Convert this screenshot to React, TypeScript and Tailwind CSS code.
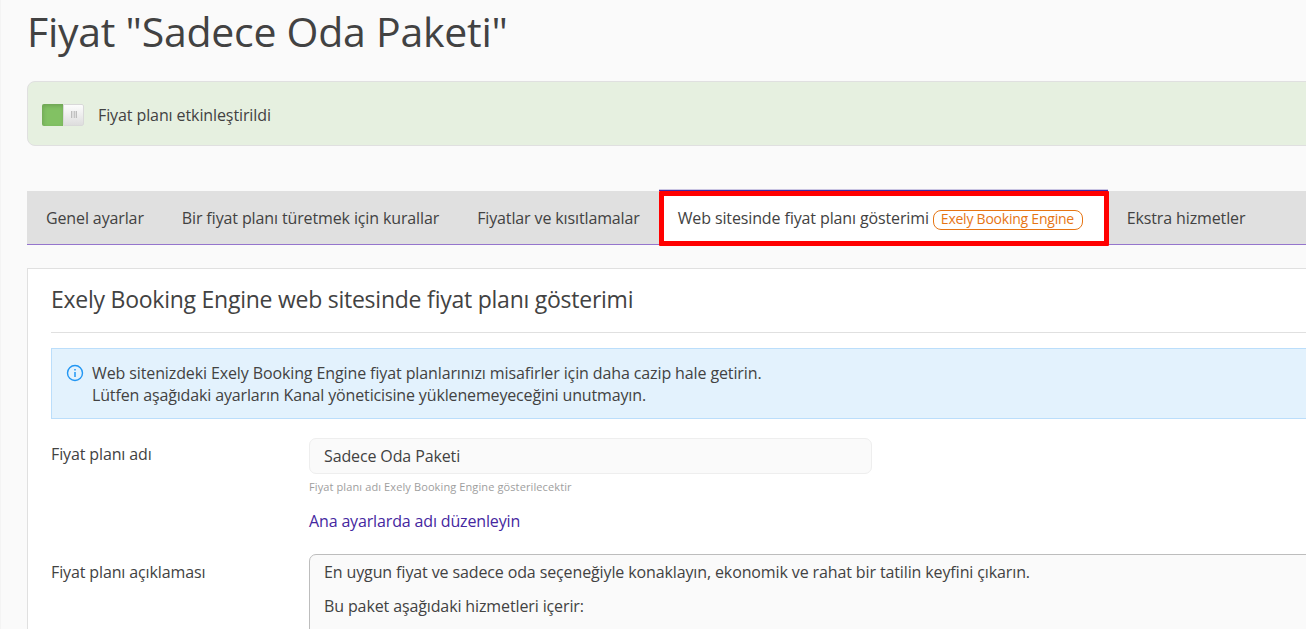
import { clsx } from 'clsx';

const tabs = [
  { id: 'general', label: 'Genel ayarlar' },
  { id: 'derive', label: 'Bir fiyat planı türetmek için kurallar' },
  { id: 'prices', label: 'Fiyatlar ve kısıtlamalar' },
  { id: 'website', label: 'Web sitesinde fiyat planı gösterimi', badge: 'Exely Booking Engine' },
  { id: 'extras', label: 'Ekstra hizmetler' },
];

function Toggle() {
  return (
    <button
      role="switch"
      aria-checked="true"
      className="flex h-[22px] w-[42px] shrink-0 overflow-hidden rounded-[2px]"
    >
      <span className="h-full w-[21px] bg-[#82c163] shadow-[inset_1px_2px_4px_rgba(0,0,0,0.16)]" />
      <span className="flex h-full w-[21px] items-center justify-center rounded-r-[2px] border border-[#d9d9d9] bg-linear-to-b from-[#fdfdfd] to-[#dedede] pb-px pl-px">
        <span className="flex h-[7px] w-[6px] justify-between bg-[#dedede]">
          <span className="w-px bg-[#bdbdbd]" />
          <span className="w-px bg-[#c4c4c4]" />
          <span className="w-px bg-[#bdbdbd]" />
        </span>
      </span>
    </button>
  );
}

function TabBar({ active }: { active: string }) {
  return (
    <nav className="mt-[43px] flex h-14 w-[1400px] items-end">
      {tabs.map((tab) => {
        const isActive = tab.id === active;
        return (
          <div
            key={tab.id}
            className={clsx(
              'shrink-0',
              isActive
                ? 'relative h-14 w-[449px] border-t border-[#c9c4e2]'
                : 'flex h-[54px] items-center border-b border-[#9575cd] bg-[#e0e0e0] px-[19px]'
            )}
          >
            {isActive ? (
              <div className="h-[55px] border-t border-[#4527a0]">
                <div className="flex h-[55px] w-[450px] items-center rounded-[1px] border-[5px] border-[#ff0000] bg-white pb-px pl-[14px]">
                  <span className="whitespace-nowrap">{tab.label}</span>
                  <span className="mt-1 ml-1 flex h-5 w-[150px] items-center justify-center rounded-[8px] border border-[#e67514] pr-px pb-[3px] text-sm tracking-[-0.23px] whitespace-nowrap text-[#e67514]">
                    {tab.badge}
                  </span>
                </div>
              </div>
            ) : (
              <span className="whitespace-nowrap">{tab.label}</span>
            )}
          </div>
        );
      })}
      <div className="h-[54px] flex-1 border-b border-[#9575cd] bg-[#e0e0e0]" />
    </nav>
  );
}

function InfoIcon() {
  return (
    <svg className="mt-[15px] h-[18px] w-[18px] shrink-0" viewBox="0 0 18 18" fill="none">
      <circle cx="9" cy="9" r="7.5" stroke="#2196f3" strokeWidth="1.4" />
      <path d="M9 8v5M9 5v1.6" stroke="#2196f3" strokeWidth="1.5" />
    </svg>
  );
}

export default function App() {
  return (
    <div className="h-[629px] w-full overflow-hidden border-l border-[#f4f4f4] bg-[#fafafa] pl-[26px] font-['Open_Sans',sans-serif] text-base tracking-[-0.125px] text-[#424242] [font-feature-settings:'liga']">
      <h1 className="h-[81px] pt-[3px] text-[41px] leading-[56px] tracking-[-0.25px] whitespace-nowrap">
        Fiyat "Sadece Oda Paketi"
      </h1>

      <div className="flex h-[65px] w-[1400px] items-center rounded-[8px] border border-[#e0e0e0] bg-[#e6f0e0] pt-[2px] pl-[14px]">
        <Toggle />
        <span className="ml-[14px] tracking-[-0.1px]">Fiyat planı etkinleştirildi</span>
      </div>

      <TabBar active="website" />

      <section className="mt-[23px] h-[500px] w-[1400px] border border-[#e0e0e0] bg-white pl-[23px]">
        <h2 className="h-16 border-b border-[#e0e0e0] pt-[14px] text-[23px] leading-[33px] tracking-[-0.25px]">
          Exely Booking Engine web sitesinde fiyat planı gösterimi
        </h2>

        <div className="mt-[15px] flex h-[71px] border border-[#bbdefb] bg-[#e3f2fd] pl-[14px]">
          <InfoIcon />
          <p className="ml-2 pt-[13px] leading-[22px] tracking-[-0.115px]">
            Web sitenizdeki Exely Booking Engine fiyat planlarınızı misafirler için daha cazip hale getirin.
            <br />
            <span className="tracking-[-0.145px]">
              Lütfen aşağıdaki ayarların Kanal yöneticisine yüklenemeyeceğini unutmayın.
            </span>
          </p>
        </div>

        <div className="mt-[19px] flex h-[116px]">
          <label className="w-[258px] pt-[5px] leading-[22px]">Fiyat planı adı</label>
          <div>
            <div className="flex h-9 w-[563px] items-center rounded-[7px] border border-[#eeeeee] bg-[#fafafa] px-[14px]">
              Sadece Oda Paketi
            </div>
            <p className="mt-[5px] text-[11px] leading-4 tracking-[0.11px] text-[#9e9e9e]">
              Fiyat planı adı Exely Booking Engine gösterilecektir
            </p>
            <a href="#" className="mt-[15px] block leading-[22px] tracking-[-0.15px] text-[#4527a0]">
              Ana ayarlarda adı düzenleyin
            </a>
          </div>
        </div>

        <div className="flex">
          <label className="w-[258px] pt-[7px] leading-[22px]">Fiyat planı açıklaması</label>
          <div className="h-[200px] flex-1 rounded-[7px] border border-[#bdbdbd] bg-[#fafafa] px-[14px] pt-[6px] leading-[22px] tracking-[-0.12px]">
            <p>En uygun fiyat ve sadece oda seçeneğiyle konaklayın, ekonomik ve rahat bir tatilin keyfini çıkarın.</p>
            <p className="mt-3">Bu paket aşağıdaki hizmetleri içerir:</p>
          </div>
        </div>
      </section>
    </div>
  );
}
